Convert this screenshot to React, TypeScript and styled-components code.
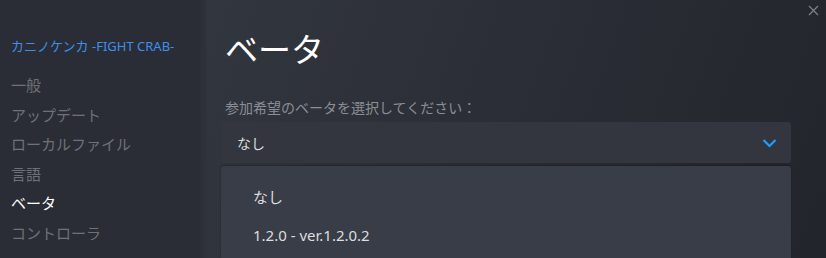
import {FC} from "react";
import styled, {createGlobalStyle} from 'styled-components'

const GlobalStyle = createGlobalStyle`
  html, body {
    margin: 0;
    padding: 0;
    background: #2a2d34;
  }

  body {
    font-family: "Noto Sans", "Noto Sans CJK JP", sans-serif;
    overflow: hidden;
  }
`

const navItems = ['一般', 'アップデート', 'ローカルファイル', '言語', 'ベータ', 'コントローラ']
const active = 'ベータ'

const ChevronDown: FC = () => (
    <svg width="15" height="10" viewBox="0 0 15 10" fill="none">
        <path d="M1.5 2 L7.5 8 L13.5 2" stroke="#1a9fff" strokeWidth="2.2"/>
    </svg>
)

const CloseIcon: FC = () => (
    <svg width="11" height="11" viewBox="0 0 11 11" fill="none">
        <path d="M1 1 L10 10 M10 1 L1 10" stroke="#7b8088" strokeWidth="1.3"/>
    </svg>
)

export default function App() {
    return (
        <>
            <GlobalStyle/>
            <Window>
                <Sidebar>
                    <GameTitle>カニノケンカ -FIGHT CRAB-</GameTitle>
                    <Nav>
                        {navItems.map(item => (
                            <NavItem key={item} active={item === active}>{item}</NavItem>
                        ))}
                    </Nav>
                </Sidebar>
                <Divider/>
                <Main>
                    <Close><CloseIcon/></Close>
                    <Heading>ベータ</Heading>
                    <Label>参加希望のベータを選択してください：</Label>
                    <Select>
                        <span>なし</span>
                        <ChevronDown/>
                    </Select>
                    <Menu>
                        <Option>なし</Option>
                        <Option>1.2.0 - ver.1.2.0.2</Option>
                    </Menu>
                </Main>
            </Window>
        </>
    )
}

const Window = styled.div`
  display: flex;
  width: 826px;
  height: 258px;
  overflow: hidden;
`

const Sidebar = styled.div`
  width: 200px;
  flex-shrink: 0;
  background: #2a2d35;
  padding: 37px 0 0 11px;
  box-sizing: border-box;
`

const GameTitle = styled.div`
  color: #3d8fec;
  font-size: 13px;
  line-height: 18px;
  white-space: nowrap;
`

const Nav = styled.ul`
  list-style: none;
  margin: 16px 0 0;
  padding: 0;
  display: flex;
  flex-direction: column;
`

const NavItem = styled.li<{ active: boolean }>`
  font-size: 15px;
  line-height: 29.6px;
  color: ${({active}) => active ? '#ffffff' : '#6e7178'};
  white-space: nowrap;
`

const Divider = styled.div`
  width: 7px;
  flex-shrink: 0;
  background: linear-gradient(to right, #2c2f37, #30333b);
`

const Main = styled.div`
  position: relative;
  flex: 1;
  background: linear-gradient(110deg, #32363f 0%, #2b2e36 45%, #22252b 100%);
  padding: 28px 35px 0 14px;
  box-sizing: border-box;
`

const Close = styled.div`
  position: absolute;
  top: 5px;
  right: 7px;
  width: 11px;
  height: 11px;
  display: flex;
`

const Heading = styled.h1`
  margin: 0 0 0 4px;
  font-size: 33px;
  font-weight: 400;
  line-height: 44px;
  color: #ffffff;
`

const Label = styled.div`
  margin: 26px 0 0 4px;
  font-size: 14px;
  line-height: 20px;
  color: #8b8e95;
`

const Select = styled.div`
  margin-top: 4px;
  height: 41px;
  background: #33363f;
  border-radius: 3px;
  display: flex;
  align-items: center;
  justify-content: space-between;
  padding: 0 14px 0 16px;
  color: #dcdedf;
  font-size: 14px;

  & > svg {
    margin-top: 1px;
  }
`

const Menu = styled.div`
  margin-top: 3px;
  background: #393d47;
  border-radius: 3px 3px 0 0;
  padding: 12px 0 8px 32px;
  height: 120px;
  box-shadow: 0 -1px 2px rgba(0, 0, 0, 0.25);
`

const Option = styled.div`
  font-size: 15px;
  line-height: 38px;
  color: #dcdedf;
`
